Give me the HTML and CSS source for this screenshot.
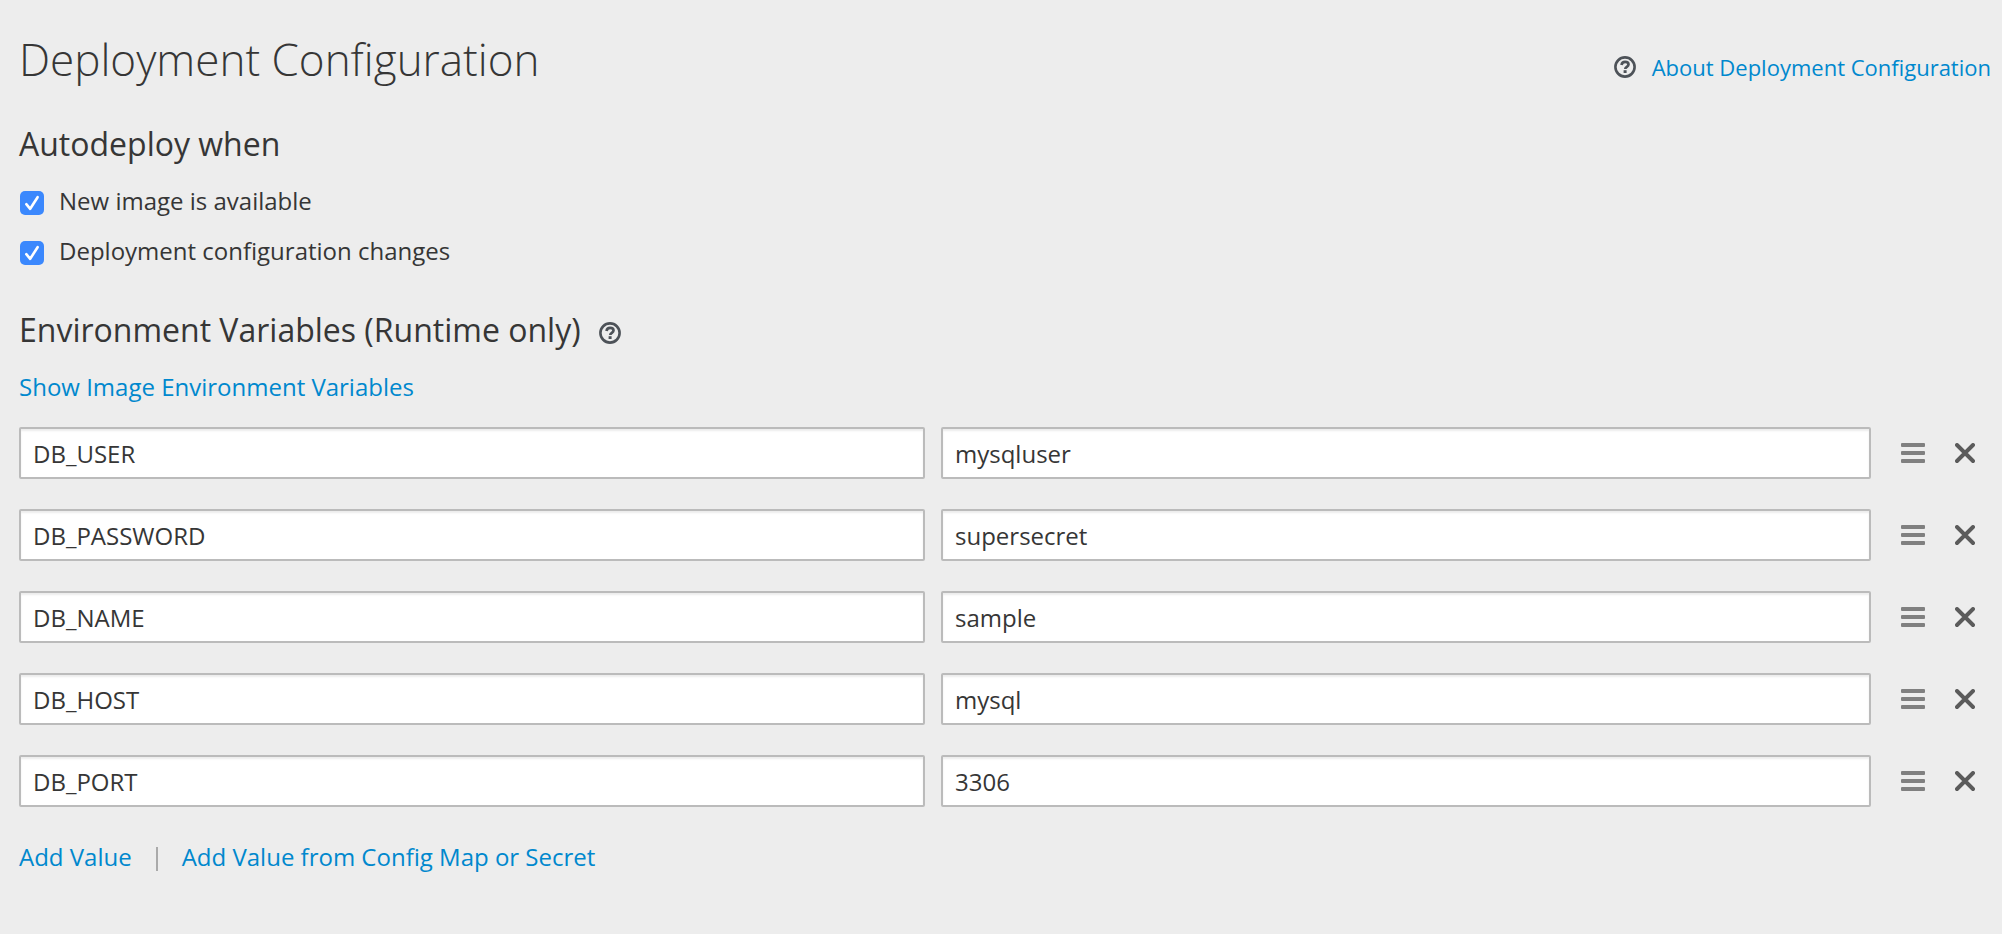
FILE: index.html
```html
<!DOCTYPE html>
<html lang="en">
<head>
<meta charset="utf-8">
<title>Deployment Configuration</title>
<link rel="stylesheet" href="styles.css">
</head>
<body>
<svg class="sprite" aria-hidden="true">
  <symbol id="help" viewBox="0 0 22 22">
    <circle cx="11" cy="11" r="9.6" fill="none" stroke="currentColor" stroke-width="2.6"/>
    <path d="M7.5 8.9C7.9 6.8 9.3 5.9 11.1 5.9C13.1 5.9 14.5 7 14.5 8.6C14.5 10.8 11.3 10.9 11.3 13" fill="none" stroke="currentColor" stroke-width="2.7"/>
    <rect x="9.6" y="14.2" width="3" height="2.8" fill="currentColor"/>
  </symbol>
  <symbol id="bars" viewBox="0 0 24 20">
    <rect width="24" height="4" rx="1"/><rect y="8" width="24" height="4" rx="1"/><rect y="16" width="24" height="4" rx="1"/>
  </symbol>
  <symbol id="close" viewBox="0 0 20 20">
    <path d="M2 2L18 18M18 2L2 18" stroke="currentColor" stroke-width="3.9" stroke-linecap="round"/>
  </symbol>
</svg>
<main class="page">
  <header class="page-header">
    <h1 class="title">Deployment Configuration</h1>
    <div class="about">
      <svg class="icon-help"><use href="#help"/></svg>
      <a class="link" href="#about">About Deployment Configuration</a>
    </div>
  </header>

  <section class="section">
    <h2 class="heading">Autodeploy when</h2>
    <div class="checks">
      <label class="check"><input class="checkbox" type="checkbox" checked>
        <svg class="tick" viewBox="0 0 24 24"><path d="M6.3 13.2L10.2 17.8L17.6 6.2"/></svg>
        <span>New image is available</span></label>
      <label class="check"><input class="checkbox" type="checkbox" checked>
        <svg class="tick" viewBox="0 0 24 24"><path d="M6.3 13.2L10.2 17.8L17.6 6.2"/></svg>
        <span>Deployment configuration changes</span></label>
    </div>
  </section>

  <section class="section">
    <h2 class="heading">Environment Variables (Runtime only)
      <svg class="icon-help"><use href="#help"/></svg></h2>
    <div class="show"><a class="link" href="#image-env">Show Image Environment Variables</a></div>
    <form class="rows">
      <div class="row">
        <input class="field" type="text" aria-label="Name" value="DB_USER">
        <input class="field" type="text" aria-label="Value" value="mysqluser">
        <div class="actions"><button class="action drag" type="button" aria-label="Reorder"><svg class="icon-bars"><use href="#bars"/></svg></button><button class="action" type="button" aria-label="Remove"><svg class="icon-close"><use href="#close"/></svg></button></div>
      </div>
      <div class="row">
        <input class="field" type="text" aria-label="Name" value="DB_PASSWORD">
        <input class="field" type="text" aria-label="Value" value="supersecret">
        <div class="actions"><button class="action drag" type="button" aria-label="Reorder"><svg class="icon-bars"><use href="#bars"/></svg></button><button class="action" type="button" aria-label="Remove"><svg class="icon-close"><use href="#close"/></svg></button></div>
      </div>
      <div class="row">
        <input class="field" type="text" aria-label="Name" value="DB_NAME">
        <input class="field" type="text" aria-label="Value" value="sample">
        <div class="actions"><button class="action drag" type="button" aria-label="Reorder"><svg class="icon-bars"><use href="#bars"/></svg></button><button class="action" type="button" aria-label="Remove"><svg class="icon-close"><use href="#close"/></svg></button></div>
      </div>
      <div class="row">
        <input class="field" type="text" aria-label="Name" value="DB_HOST">
        <input class="field" type="text" aria-label="Value" value="mysql">
        <div class="actions"><button class="action drag" type="button" aria-label="Reorder"><svg class="icon-bars"><use href="#bars"/></svg></button><button class="action" type="button" aria-label="Remove"><svg class="icon-close"><use href="#close"/></svg></button></div>
      </div>
      <div class="row">
        <input class="field" type="text" aria-label="Name" value="DB_PORT">
        <input class="field" type="text" aria-label="Value" value="3306">
        <div class="actions"><button class="action drag" type="button" aria-label="Reorder"><svg class="icon-bars"><use href="#bars"/></svg></button><button class="action" type="button" aria-label="Remove"><svg class="icon-close"><use href="#close"/></svg></button></div>
      </div>
    </form>
    <div class="adders">
      <a class="link" href="#add">Add Value</a>
      <span class="divider"></span>
      <a class="link" href="#add-from">Add Value from Config Map or Secret</a>
    </div>
  </section>
</main>
</body>
</html>
```
FILE: styles.css
```css
* { box-sizing: border-box; }
body {
  margin: 0;
  background: #ededed;
  color: #363636;
  font: 24px/40px "Open Sans", "Noto Sans", sans-serif;
}
.sprite { display: none; }
.page { min-height: 100vh; padding: 29px 11px 40px 19px; }
.page-header {
  display: flex;
  justify-content: space-between;
  align-items: baseline;
}
.title {
  margin: 0;
  font-size: 44px;
  line-height: 60px;
  font-weight: 300;
}
.about { font-size: 22px; }
.about .icon-help { margin-right: 10px; }
.link { color: #0088ce; text-decoration: none; }
.link:hover { text-decoration: underline; }
.icon-help {
  width: 22px;
  height: 22px;
  color: #4d5258;
  vertical-align: -2px;
}
.section { margin-top: 33px; }
.section + .section { margin-top: 37px; }
.heading {
  margin: 0 0 15px;
  font-size: 32px;
  line-height: 44px;
  font-weight: 400;
}
.heading .icon-help { margin-left: 10px; }
.checks { display: grid; gap: 10px; justify-items: start; }
.check {
  display: grid;
  grid-template-columns: 24px auto;
  column-gap: 15px;
  padding-left: 1px;
}
.checkbox, .tick {
  grid-area: 1 / 1;
  width: 24px;
  height: 24px;
  margin: 10px 0 0;
}
.checkbox {
  appearance: none;
  border-radius: 5px;
  background: #3b88fd;
}
.tick {
  fill: none;
  stroke: #fff;
  stroke-width: 2.6;
  stroke-linecap: round;
  stroke-linejoin: round;
  pointer-events: none;
  visibility: hidden;
}
.checkbox:checked + .tick { visibility: visible; }
.rows { display: grid; gap: 30px; margin-top: 20px; }
.row {
  display: grid;
  grid-template-columns: 906fr 930fr 104px;
  gap: 16px;
}
.field {
  min-width: 0;
  width: 100%;
  height: 52px;
  padding: 0 12px;
  border: 2px solid #bbb;
  border-radius: 2px;
  background: #fff;
  box-shadow: inset 0 2px 2px rgba(3, 3, 3, 0.075);
  color: inherit;
  font: inherit;
}
.actions {
  display: flex;
  align-items: center;
  justify-content: flex-end;
  gap: 8px;
  padding-right: 5px;
}
.action {
  display: flex;
  padding: 11px;
  border: 0;
  background: none;
  color: #5b5b5b;
  fill: currentColor;
}
.drag { color: #808080; cursor: move; }
.icon-bars { width: 24px; height: 20px; }
.icon-close { width: 20px; height: 20px; }
.adders { display: flex; align-items: center; margin-top: 30px; }
.divider { width: 2px; height: 24px; margin: 4px 24px 0; background: #aaa; }
```
